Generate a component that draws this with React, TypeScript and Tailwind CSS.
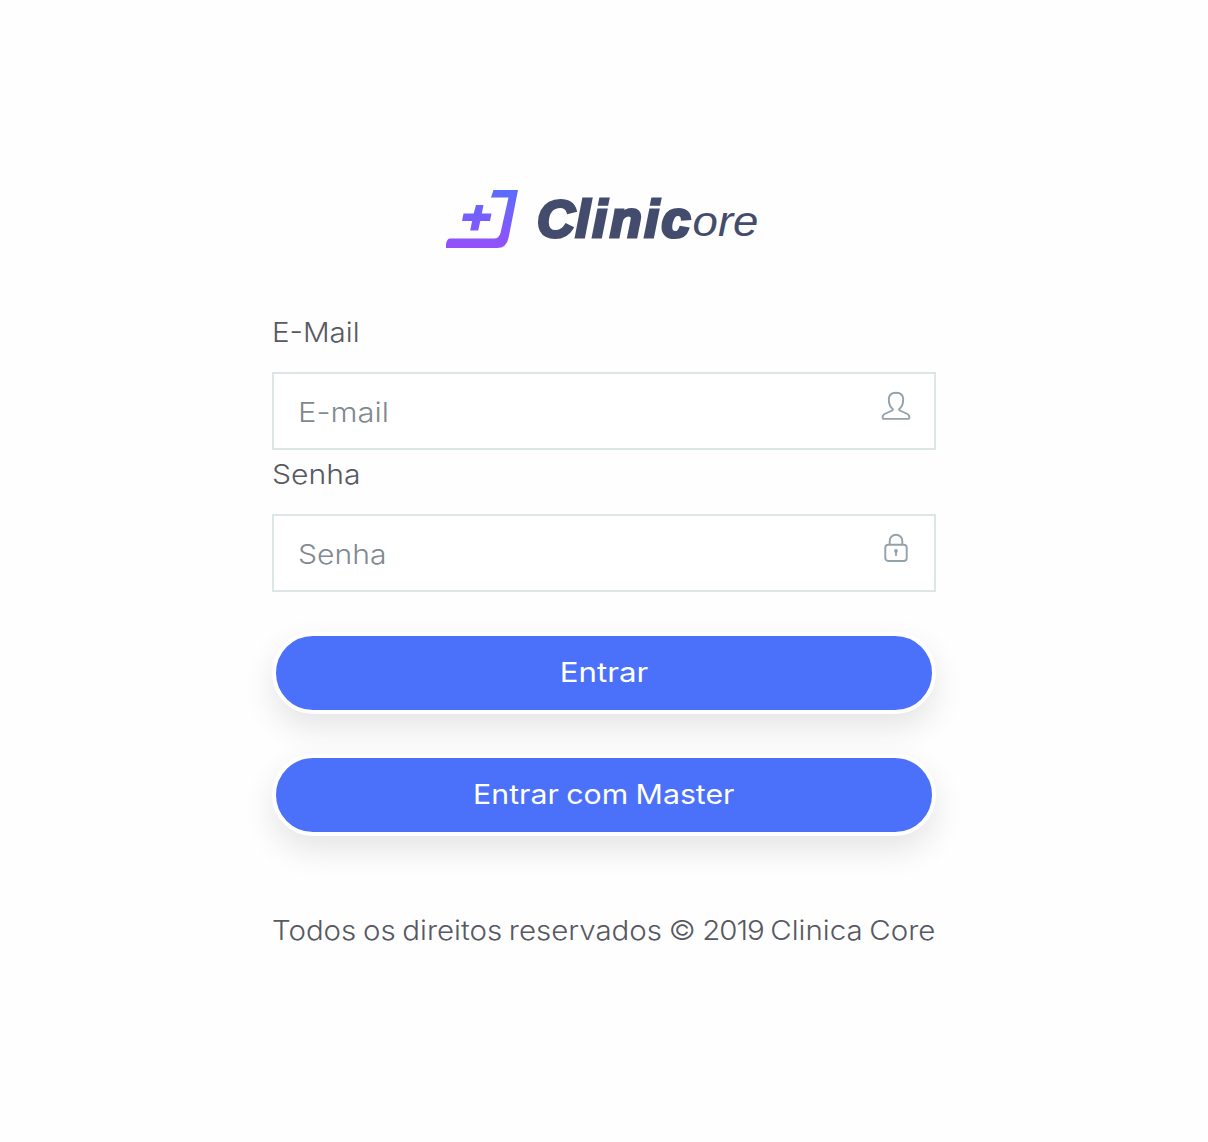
import { useState } from "react";
import type { ReactNode } from "react";

function Logo() {
  return (
    <svg width="316" height="62" viewBox="446 188 316 62" role="img" aria-label="Clinicore">
      <defs>
        <linearGradient id="mark" gradientUnits="userSpaceOnUse" x1="0" y1="190" x2="0" y2="248">
          <stop offset="0" stopColor="#5a6cfe" />
          <stop offset="1" stopColor="#9450fb" />
        </linearGradient>
      </defs>
      <g fill="url(#mark)">
        <path d="M493.5 190H518L508.5 238Q506.500 248 497 248H446V244Q447 238.500 450 238.500H494Q499 238.500 500.500 233L508.500 197.500H491Z" />
        <path d="M476 205H483.500L481.800 213.500H491.500L490 221H480.300L478.200 230.500H470.200L472.100 221H462L463.500 213.500H473.700Z" />
      </g>
      <g fill="#444c6e" stroke="#444c6e" fontFamily="'Liberation Sans', Arial, sans-serif" fontStyle="italic">
        <text x="537 575.500 592.500 610 644.500 661.500" y="236.800" fontSize="52" fontWeight="700" strokeWidth="3.200">Clinic</text>
        <text x="692.500" y="235.500" fontSize="43" stroke="none" textLength="66" lengthAdjust="spacingAndGlyphs">ore</text>
      </g>
    </svg>
  );
}

function UserIcon() {
  return (
    <svg width="30" height="30" viewBox="0 0 30 30" fill="none" stroke="#93a1aa" strokeWidth="1.9" strokeLinejoin="round">
      <path d="M15 1.700C10.500 1.700 7.800 4.200 7.800 8.500C7.800 13 9 16 12 18.200L11.300 19.500L3.500 23Q1.600 24 1.600 26.300Q1.600 27.900 3.200 27.900H26.800Q28.400 27.900 28.400 26.300Q28.400 24 26.500 23L18.700 19.500L18 18.200C21 16 22.200 13 22.200 8.500C22.200 4.200 19.500 1.700 15 1.700Z" />
    </svg>
  );
}

function LockIcon() {
  return (
    <svg width="30" height="30" viewBox="0 0 30 30" fill="none" stroke="#93a1aa" strokeWidth="1.9">
      <rect x="4.300" y="11.800" width="21.400" height="16.200" rx="3" />
      <path d="M8.700 12V8A6.300 6.300 0 0 1 21.300 8V12" />
      <circle cx="15" cy="18" r="1.900" fill="#93a1aa" stroke="none" />
      <path d="M15 18V23" strokeWidth="1.700" />
    </svg>
  );
}

type FieldProps = {
  id: string;
  label: string;
  labelClass: string;
  placeholder: string;
  inputClass: string;
  type: string;
  icon: ReactNode;
};

function Field({ id, label, labelClass, placeholder, inputClass, type, icon }: FieldProps) {
  const [value, setValue] = useState("");
  return (
    <div className="flex flex-col">
      <label htmlFor={id} className={`h-16 origin-left self-start pt-1 leading-10 text-[#575962] ${labelClass}`}>
        {label}
      </label>
      <div className="flex h-[78px] items-center justify-between border-2 border-[#dde6e7] bg-white pr-[23px] pl-6">
        <input
          id={id}
          type={type}
          value={value}
          onChange={(e) => setValue(e.target.value)}
          placeholder={placeholder}
          className={`h-full w-[500px] origin-left bg-transparent pt-0.5 font-light text-[#575962] outline-none placeholder:text-[#818a91] ${inputClass}`}
        />
        <span className="mb-2.5">{icon}</span>
      </div>
    </div>
  );
}

function PillButton({ children, textClass }: { children: ReactNode; textClass: string }) {
  return (
    <button
      type="submit"
      className="h-[82px] w-full rounded-full border-4 border-white bg-[#4b71fb] text-center font-normal text-white shadow-[0_14px_32px_rgba(0,0,0,0.1)]"
    >
      <span className={`inline-block ${textClass}`}>{children}</span>
    </button>
  );
}

export default function App() {
  return (
    <main className="flex h-[1142px] justify-center bg-[#fefefe] font-['Inter',sans-serif] text-[27.500px] font-light">
      <form className="flex w-[664px] flex-col pt-[188px]" onSubmit={(e) => e.preventDefault()}>
        <div className="flex h-[120px] justify-center">
          <Logo />
        </div>
        <Field id="email" type="email" label="E-Mail" labelClass="scale-x-[1.075]" placeholder="E-mail" inputClass="scale-x-[1.125]" icon={<UserIcon />} />
        <Field id="password" type="password" label="Senha" labelClass="scale-x-[1.095]" placeholder="Senha" inputClass="scale-x-[1.095]" icon={<LockIcon />} />
        <div className="mt-10 flex flex-col gap-10">
          <PillButton textClass="scale-x-[1.135]">Entrar</PillButton>
          <PillButton textClass="scale-x-[1.100] [word-spacing:-1px]">Entrar com Master</PillButton>
        </div>
        <p className="mt-[74px] origin-left scale-x-[1.071] self-start leading-10 whitespace-nowrap text-[#575962] [word-spacing:-1.500px]">
          Todos os direitos reservados © <span className="tracking-[-1px]">2019</span> Clinica Core
        </p>
      </form>
    </main>
  );
}
